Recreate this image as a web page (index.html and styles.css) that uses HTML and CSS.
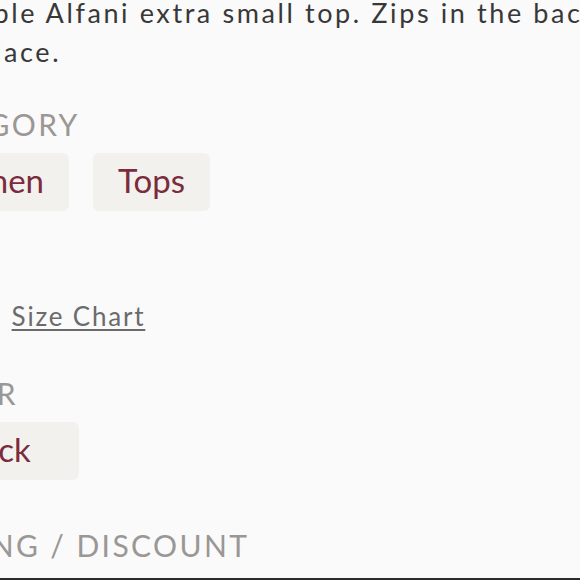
FILE: index.html
```html
<!DOCTYPE html>
<html lang="en">
<head>
    <meta charset="UTF-8">
    <meta name="viewport" content="width=device-width, initial-scale=1.0">
    <title>Product Details</title>
    <link rel="stylesheet" href="styles.css">
</head>
<body>
    <div class="page">
        <div class="details">
            <p class="desc">Adorable Alfani extra small top. Zips in the back. Black lace.</p>

            <div class="label label-first">CATEGORY</div>
            <div class="chips">
                <span class="chip">Women</span>
                <span class="chip">Tops</span>
            </div>

            <div class="label">SIZE</div>
            <div class="size-row">
                <span class="size-value">XS</span>
                <a class="size-link" href="#">Size Chart</a>
            </div>

            <div class="label label-color">COLOR</div>
            <div class="chips">
                <span class="chip chip-color">Black</span>
            </div>

            <div class="label">PRICING / DISCOUNT</div>
        </div>
        <div class="checkout-bar"></div>
    </div>
</body>
</html>
```

FILE: styles.css
```css
body {
    margin: 0;
    background-color: #fafafa;
    font-family: Lato, "Open Sans", sans-serif;
    overflow: hidden;
}

.page {
    display: flex;
    flex-direction: column;
    height: 100vh;
}

.details {
    flex: 1;
    overflow: hidden;
    width: 780px;
    margin-left: -95px;
}

.desc {
    width: 740px;
    margin: -7px 0 0 4px;
    font-size: 27px;
    line-height: 39px;
    letter-spacing: 2.6px;
    color: #383838;
}

.label {
    margin-top: 47px;
    font-size: 30px;
    line-height: 36px;
    letter-spacing: 2.4px;
    color: #9a9795;
}

.label-first {
    margin-top: 35px;
}

.label-color {
    margin-top: 41px;
}

.chips {
    display: flex;
    gap: 24px;
    margin-top: 11px;
}

.chip {
    height: 58px;
    padding: 0 25px;
    box-sizing: border-box;
    line-height: 54px;
    font-size: 33px;
    color: #7a2c3c;
    background-color: #f3f1ee;
    border-radius: 6px;
}

.chip-color {
    padding: 0 48px;
}

.size-row {
    display: flex;
    gap: 72px;
    margin-top: 4px;
    font-size: 26px;
    line-height: 36px;
    letter-spacing: 1.8px;
}

.size-value {
    color: #383838;
}

.size-link {
    color: #6b6b6b;
    text-decoration: underline;
    text-decoration-thickness: 1.5px;
    text-underline-offset: 3px;
}

.checkout-bar {
    height: 2px;
    flex-shrink: 0;
    background-color: #2b2b2b;
}
```
